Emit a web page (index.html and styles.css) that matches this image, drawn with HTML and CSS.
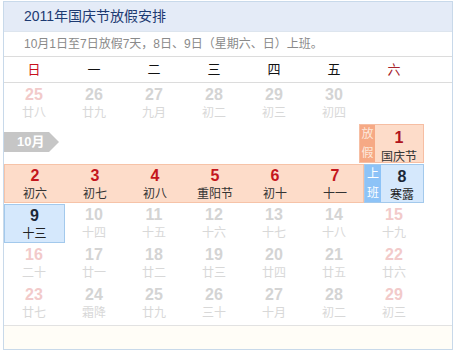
FILE: index.html
```html
<!DOCTYPE html>
<html lang="zh-CN">
<head>
<meta charset="utf-8">
<title>2011年国庆节放假安排</title>
<link rel="stylesheet" href="styles.css">
</head>
<body>
<div class="cal">
  <div class="head">2011年国庆节放假安排</div>
  <div class="sub">10月1日至7日放假7天，8日、9日（星期六、日）上班。</div>
  <div class="week">
    <span class="wk red">日</span><span class="wk">一</span><span class="wk">二</span><span class="wk">三</span><span class="wk">四</span><span class="wk">五</span><span class="wk red2">六</span>
  </div>
  <div class="days">
    <div class="day off wkend"><b>25</b><i>廿八</i></div>
    <div class="day off"><b>26</b><i>廿九</i></div>
    <div class="day off"><b>27</b><i>九月</i></div>
    <div class="day off"><b>28</b><i>初二</i></div>
    <div class="day off"><b>29</b><i>初三</i></div>
    <div class="day off"><b>30</b><i>初四</i></div>
    <div class="day"></div>

    <div class="tagcell"><span class="tag">10月</span></div>
    <div class="mark holiday">
      <span class="lab">放<br>假</span>
      <div class="mbody"><b>1</b><i>国庆节</i></div>
    </div>

    <div class="band">
      <div class="day hol"><b>2</b><i>初六</i></div>
      <div class="day hol"><b>3</b><i>初七</i></div>
      <div class="day hol"><b>4</b><i>初八</i></div>
      <div class="day hol"><b>5</b><i>重阳节</i></div>
      <div class="day hol"><b>6</b><i>初十</i></div>
      <div class="day hol"><b>7</b><i>十一</i></div>
    </div>
    <div class="mark work">
      <span class="lab">上<br>班</span>
      <div class="mbody"><b>8</b><i>寒露</i></div>
    </div>

    <div class="day workday"><b>9</b><i>十三</i></div>
    <div class="day off"><b>10</b><i>十四</i></div>
    <div class="day off"><b>11</b><i>十五</i></div>
    <div class="day off"><b>12</b><i>十六</i></div>
    <div class="day off"><b>13</b><i>十七</i></div>
    <div class="day off"><b>14</b><i>十八</i></div>
    <div class="day off wkend"><b>15</b><i>十九</i></div>

    <div class="day off wkend"><b>16</b><i>二十</i></div>
    <div class="day off"><b>17</b><i>廿一</i></div>
    <div class="day off"><b>18</b><i>廿二</i></div>
    <div class="day off"><b>19</b><i>廿三</i></div>
    <div class="day off"><b>20</b><i>廿四</i></div>
    <div class="day off"><b>21</b><i>廿五</i></div>
    <div class="day off wkend"><b>22</b><i>廿六</i></div>

    <div class="day off wkend"><b>23</b><i>廿七</i></div>
    <div class="day off"><b>24</b><i>霜降</i></div>
    <div class="day off"><b>25</b><i>廿九</i></div>
    <div class="day off"><b>26</b><i>三十</i></div>
    <div class="day off"><b>27</b><i>十月</i></div>
    <div class="day off"><b>28</b><i>初二</i></div>
    <div class="day off wkend"><b>29</b><i>初三</i></div>
  </div>
  <div class="foot"></div>
</div>
</body>
</html>
```

FILE: styles.css
```css
* { box-sizing: border-box; }
html, body { margin: 0; padding: 0; background: #fff; }
body {
  font-family: "Liberation Sans", "Noto Sans CJK SC", sans-serif;
  color: #333;
}
.cal {
  margin: 1px 0 0 3px;
  width: 450px;
  border: 1px solid #c8d9ea;
  background: #fff;
}
.head {
  height: 30px;
  line-height: 29px;
  padding-left: 20px;
  background: #e4ebf7;
  color: #1d3a72;
  font-size: 14px;
  border-bottom: 1px solid #dde5ee;
}
.sub {
  height: 25px;
  line-height: 24px;
  padding-left: 20px;
  font-size: 12px;
  color: #8a8a8a;
  border-bottom: 1px solid #dcdcdc;
}
.week {
  display: grid;
  grid-template-columns: repeat(7, 60px);
  height: 26px;
  border-bottom: 1px solid #dcdcdc;
}
.wk {
  text-align: center;
  line-height: 25px;
  font-size: 13px;
  color: #111;
}
.wk.red { color: #c8101a; }
.wk.red2 { color: #a8242c; }
.days {
  display: grid;
  grid-template-columns: repeat(7, 60px);
  grid-auto-rows: 40px;
  padding-bottom: 2px;
  border-bottom: 1px solid #e2e2e2;
}
.day {
  display: flex;
  flex-direction: column;
  align-items: center;
  padding-top: 2px;
}
.day b, .mbody b {
  font-weight: bold;
  font-size: 16px;
  line-height: 19px;
}
.day i, .mbody i {
  font-style: normal;
  font-size: 12px;
  line-height: 19px;
}
.off b { color: #d4d4d4; }
.off i { color: #d8d8d8; }
.off.wkend b { color: #f2caca; }
.tagcell {
  grid-column: 1 / 7;
  padding-top: 9px;
}
.tag {
  display: block;
  width: 55px;
  height: 20px;
  line-height: 20px;
  padding-left: 13px;
  background: #c6c6c6;
  color: #fff;
  font-weight: bold;
  font-size: 13px;
  clip-path: polygon(0 0, 45px 0, 55px 50%, 45px 100%, 0 100%);
}
.mark {
  display: flex;
  border: 1px solid;
}
.mark .lab {
  color: #fff;
  font-size: 12px;
  line-height: 19px;
  text-align: center;
  padding-top: 0;
}
.mark .mbody {
  flex: 1;
  display: flex;
  flex-direction: column;
  align-items: center;
}
.holiday {
  margin: 1px 0 0 -5px;
  background: #fddcc9;
  border-color: #f6bea3;
}
.holiday .lab { width: 15px; background: #f6a985; color: #fde8dc; }
.holiday b { color: #b0141c; margin-top: 3px; }
.holiday i { color: #333; margin-top: 1px; }
.work {
  margin-top: 1px;
  background: #d5e8fc;
  border-color: #a3c9ec;
}
.work .lab { width: 16px; background: #8dc3f7; }
.work b { color: #1c2838; margin-top: 2px; }
.work i { color: #222; }
.band {
  grid-column: 1 / 7;
  display: grid;
  grid-template-columns: repeat(6, 60px);
  margin-top: 1px;
  background: #fddcc9;
  border: 1px solid #f6c3a8;
}
.hol { padding-top: 1px; }
.hol b { color: #c4161c; }
.hol i { color: #333; }
.workday {
  margin-top: 1px;
  background: #d5e8fc;
  border: 1px solid #a3c9ec;
  padding-top: 1px;
  width: 61px;
}
.workday b { color: #1c2838; }
.workday i { color: #222; }
.foot {
  height: 23px;
  background: #fffdf7;
}
```
